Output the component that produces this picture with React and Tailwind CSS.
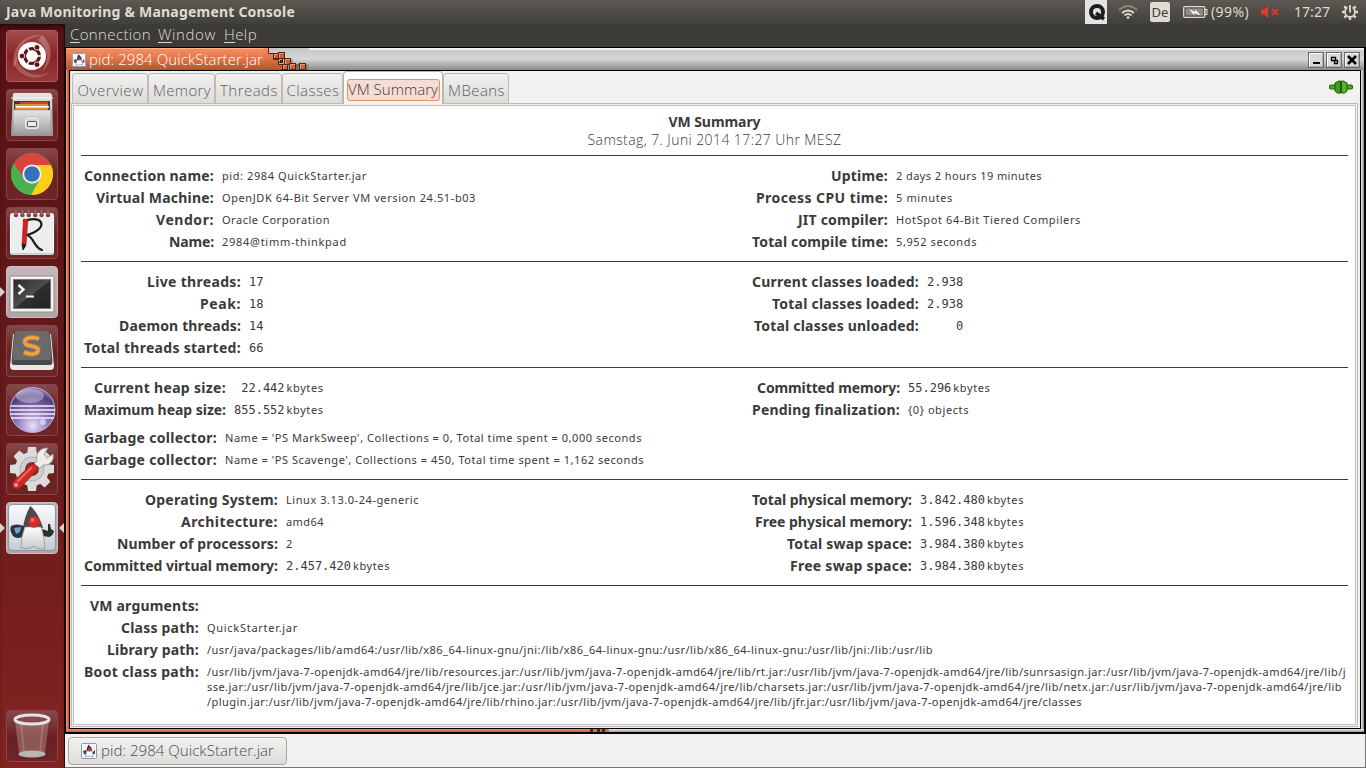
import React, { useLayoutEffect, useRef } from "react";

/* Single line of text whose tracking is adjusted to fill `w` pixels. */
function Fit({ w, className = "", children }) {
  const ref = useRef(null);
  useLayoutEffect(() => {
    const el = ref.current;
    el.style.letterSpacing = "0px";
    const natural = el.getBoundingClientRect().width;
    const n = el.textContent.length;
    if (n > 1) {
      const s = (w - natural) / n;
      el.style.letterSpacing = s.toFixed(4) + "px";
    }
  }, [w]);
  return (
    <span ref={ref} className={"inline-block whitespace-pre " + className}>
      {children}
    </span>
  );
}

const LIGHT = "font-['Open_Sans','Noto_Sans',sans-serif] font-light text-[15px] leading-5 ";

function JavaIcon({ className }) {
  return (
    <svg viewBox="0 0 16 16" className={className}>
      <rect x="0.5" y="0.5" width="15" height="15" rx="1" fill="#f4f7fa" stroke="#7f9db9" />
      <path d="M7.5 1.5 L10.500 5 L11.500 10 L5 10 L6 5Z" fill="#333" />
      <path d="M2 8 L5 7 L6 11 L3 11.500Z M12 9 L14 7 V11 H12Z" fill="#3c4b55" />
      <path d="M5.500 8 L11 8 L12 14 L9 13 L4.500 14Z" fill="#fff" stroke="#777" strokeWidth=".6" />
      <circle cx="8.600" cy="6.600" r="1.800" fill="#e23030" />
    </svg>
  );
}

function Tile({ children, kind = "dark", left, right }) {
  const bg =
    kind === "light"
      ? "bg-linear-to-b from-[#c4b6b9] to-[#b5a2a4] border-[#cdc0c2]"
      : kind === "red"
        ? "bg-linear-to-b from-[#a04b4c] via-[#8b2224] to-[#9a3a3b] border-[#a96061]"
        : "bg-linear-to-b from-[#86494b] via-[#6b2022] to-[#6f2426] border-[#85484a]";
  return (
    <div className="relative flex w-16 justify-center">
      {left && (
        <svg className="absolute left-0 top-[21px] h-[10px] w-[5px]" viewBox="0 0 5 10">
          <path d="M0 0 L5 5 L0 10Z" fill="#d8d0d0" />
        </svg>
      )}
      <div className={"h-[52px] w-[52px] overflow-hidden rounded-[4px] border " + bg}>{children}</div>
      {right && (
        <svg className="absolute right-0 top-[21px] h-[10px] w-[5px]" viewBox="0 0 5 10">
          <path d="M5 0 L0 5 L5 10Z" fill="#d8d0d0" />
        </svg>
      )}
    </div>
  );
}

const Ico = ({ children }) => (
  <svg viewBox="1 1 50 50" className="block h-[50px] w-[50px]">
    {children}
  </svg>
);

function Launcher() {
  return (
    <div className="flex w-[65px] shrink-0 flex-col items-start border-r border-[#1d0b0b] bg-linear-to-b from-[#561114] via-[#661a1b] to-[#832321] pt-[6px] shadow-[inset_0_5px_5px_-2px_rgba(0,0,0,0.5)]">
      <div className="flex flex-col gap-[7px]">
        <Tile kind="red">
          <Ico>
            <path d="M8 38 C4 14 22 2 38 6 C24 5 12 14 12 28Z" fill="#fff" opacity=".22" />
            <path d="M36 5 C48 16 47 32 36 42 C43 30 43 20 32 10Z" fill="#fff" opacity=".25" />
            <path d="M10 26 C12 40 28 50 44 42 C32 52 14 48 8 34Z" fill="#fff" opacity=".2" />
            <circle cx="26" cy="26" r="14" fill="#fff" />
            <circle cx="26" cy="26" r="7.400" fill="none" stroke="#5d1517" strokeWidth="3.400" />
            <g stroke="#fff" strokeWidth="1.600">
              <path d="M26 26 L36 26 M26 26 L21 34.700 M26 26 L21 17.300" />
            </g>
            <circle cx="26" cy="26" r="5.600" fill="#fff" />
            <g fill="#5d1517" stroke="#fff" strokeWidth=".8">
              <circle cx="16" cy="26" r="2.800" />
              <circle cx="31" cy="17.400" r="2.800" />
              <circle cx="31" cy="34.600" r="2.800" />
            </g>
          </Ico>
        </Tile>
        <Tile>
          <Ico>
            <defs>
              <linearGradient id="cab" x2="0" y2="1">
                <stop offset="0" stopColor="#e6e6e6" />
                <stop offset="1" stopColor="#9b9b9b" />
              </linearGradient>
            </defs>
            <path d="M7 5 Q7 4 9 4 H44 Q45 4 46 6 L47 46 Q47 47 46 47 H7 Q5 47 5 46Z" fill="url(#cab)" />
            <path d="M5 9 H47" stroke="#f7f7f7" />
            <rect x="8" y="12" width="36" height="12" fill="#3b3b3b" />
            <path d="M14 13 H25 L27 12.500 H42 V18 H14Z" fill="#b5501a" />
            <path d="M9 15 H42 V22 H9Z" fill="#e88a2e" />
            <rect x="10" y="17" width="33" height="1.600" fill="#fff" />
            <path d="M7 21 H45 V46 H7Z" fill="url(#cab)" stroke="#8b8b8b" strokeWidth=".6" />
            <rect x="19.500" y="29.500" width="13" height="10" rx="2" fill="#d0d0d0" stroke="#eee" />
            <rect x="21.500" y="32.500" width="9" height="5" rx="1" fill="#eee" stroke="#555" />
          </Ico>
        </Tile>
        <Tile>
          <Ico>
            <circle cx="26" cy="26" r="21" fill="#4cb050" />
            <path d="M7.800 15.500 A21 21 0 0 1 45.500 18 H26 L17 29Z" fill="#d9453d" />
            <path d="M26 17 H45 A21 21 0 0 1 25 47 L34 31 A10 10 0 0 0 26 17Z" fill="#fbcf15" />
            <path d="M7.500 16 L17 31 Q22 37 31 35 L25 47 A21 21 0 0 1 7.500 16Z" fill="#4cb050" />
            <circle cx="26" cy="26" r="9.600" fill="#f2f2f2" />
            <circle cx="26" cy="26" r="7.800" fill="#3573b9" />
          </Ico>
        </Tile>
        <Tile>
          <Ico>
            <rect x="4.500" y="6.500" width="43" height="41" rx="2" fill="#ededed" stroke="#fff" />
            <path d="M4 47 H48" stroke="#aaa" />
            {[10, 16.4, 22.8, 29.2, 35.6, 42].map((x) => (
              <g key={x}>
                <circle cx={x} cy="8" r="2.3" fill="#7d4142" />
                <rect x={x - 0.8} y="3" width="1.6" height="5" fill="#a46a6b" />
              </g>
            ))}
            <path d="M18 14 C38 7 43 22 21 28 C28 30 28 41 36 43" fill="none" stroke="#1b1b1b" strokeWidth="2.200" strokeLinecap="round" />
            <path d="M17.500 12 L22 12.500 L20 38 L16 37Z" fill="#d81e1e" stroke="#8a1212" strokeWidth=".5" />
            <path d="M16 37 L20 38 L17 43Z" fill="#222" stroke="#222" />
          </Ico>
        </Tile>
        <Tile kind="light" left>
          <Ico>
            <defs>
              <linearGradient id="term" x2="1" y2="1">
                <stop offset="0" stopColor="#2a2a2a" />
                <stop offset=".5" stopColor="#4d4d4d" />
                <stop offset=".52" stopColor="#2e2e2e" />
                <stop offset="1" stopColor="#222" />
              </linearGradient>
            </defs>
            <rect x="4" y="10" width="44" height="36" rx="1" fill="#f3f3f3" stroke="#8f8b8b" />
            <rect x="7.500" y="13.500" width="37" height="29" fill="url(#term)" stroke="#777" />
            <path d="M12.500 19 L17.500 23.500 L12.500 28" fill="none" stroke="#f4f4f4" strokeWidth="2.400" />
            <path d="M20 30.500 H28" stroke="#f4f4f4" strokeWidth="2" />
          </Ico>
        </Tile>
        <Tile>
          <Ico>
            <path d="M7 9 L4 41 Q4 45 8 45 H44 Q48 45 48 41 L45 9Z" fill="#e9e9e9" />
            <path d="M10 6 H42 Q44 6 44 8 L46.500 36 Q46.500 40 44 40 H8 Q5.500 40 5.500 36 L8 8 Q8 6 10 6Z" fill="#4a4a4a" />
            <path d="M11 6 H41 Q43 6 43.200 8 L45.500 33 Q45.500 35 43 35 H9 Q6.500 35 6.500 33 L8.800 8 Q9 6 11 6Z" fill="#6a6a6a" />
            <path d="M33 14 C25 11 18 13 19 18 C20 22 32 20 32 25 C32 30 23 30 18 27" fill="none" stroke="#ffb15e" strokeWidth="5" opacity=".45" />
            <path d="M33 14 C25 11 18 13 19 18 C20 22 32 20 32 25 C32 30 23 30 18 27" fill="none" stroke="#f7a03a" strokeWidth="3.200" />
          </Ico>
        </Tile>
        <Tile>
          <Ico>
            <defs>
              <radialGradient id="ecl" cx=".5" cy=".85" r=".9">
                <stop offset="0" stopColor="#e9dfff" />
                <stop offset=".4" stopColor="#8c78b9" />
                <stop offset=".75" stopColor="#51407f" />
                <stop offset="1" stopColor="#a79bd0" />
              </radialGradient>
            </defs>
            <circle cx="26.500" cy="26" r="22.500" fill="url(#ecl)" stroke="#b9aede" strokeWidth="1" />
            <ellipse cx="24" cy="12" rx="14" ry="7" fill="#fff" opacity=".35" />
            <path d="M5 22 H48 M4 26 H49 M4 30 H49 M5 34 H48" stroke="#f4effc" strokeWidth="1.400" />
            <circle cx="37" cy="38" r="3" fill="#fff" opacity=".5" />
          </Ico>
        </Tile>
        <Tile>
          <Ico>
            <g transform="translate(26 26)" fill="#dcdcdc">
              {[0, 45, 90, 135, 180, 225, 270, 315].map((a) => (
                <path key={a} transform={`rotate(${a})`} d="M-5 -14 L-4 -22 H4 L5 -14Z" />
              ))}
              <circle r="17" />
              <circle r="12" fill="#cfcfcf" stroke="#b0b0b0" />
              <circle r="7" fill="#7c3537" />
            </g>
            <path d="M31 18 C29 10 35 4 42 5 L38 11 L41 15 L47 11 C49 18 43 23 37 22 L32 27 L27 22Z" fill="#ededed" stroke="#8f8f8f" strokeWidth=".8" />
            <path d="M27 20 L33 25 L14 45 Q10 48 7 44.500 Q4 41 8 38Z" fill="#cf2a27" stroke="#8c1414" strokeWidth=".8" />
            <path d="M26 24 L11 39" stroke="#ee6a60" strokeWidth="2" />
            <circle cx="10" cy="42" r="1.800" fill="#f5b0a8" />
          </Ico>
        </Tile>
        <Tile kind="light" left right>
          <Ico>
            <defs>
              <linearGradient id="duke" x2="0" y2="1">
                <stop offset="0" stopColor="#fbfcfd" />
                <stop offset="1" stopColor="#c3cdd8" />
              </linearGradient>
              <linearGradient id="dukeb" x2="0" y2="1">
                <stop offset="0" stopColor="#fff" />
                <stop offset="1" stopColor="#c9c9c9" />
              </linearGradient>
            </defs>
            <rect x="2.500" y="2.500" width="47" height="46" rx="4" fill="url(#duke)" stroke="#8b99ab" strokeWidth="1.200" />
            <path d="M24.500 4 Q33 12 37 26 H17 Q19 12 24.500 4Z" fill="#4a4a4a" />
            <path d="M18 24 Q10 21 5 24 Q3 28 7 34 Q11 38 18 34Z" fill="#303335" />
            <path d="M8 26 L15 25 L14 30 L10 32Z" fill="#6ea2c8" />
            <path d="M36 27 L42 29 L42 22 L44 22 L45 27 L48 29 Q47 34 43 35 L37 34Z" fill="#2f2f2f" />
            <path d="M19 25 H35 Q39 36 39 47 Q31 48 28 44 Q23 48 15 46 Q15 34 19 25Z" fill="url(#dukeb)" stroke="#8d8d8d" strokeWidth=".7" />
            <circle cx="28" cy="20" r="5.800" fill="#d42a2a" />
            <circle cx="26.500" cy="18" r="2" fill="#ee6b66" />
          </Ico>
        </Tile>
      </div>
      <div className="mt-auto mb-[6px]">
        <Tile>
          <Ico>
            <path d="M9 10 L13 44 Q26 50 39 44 L43 10Z" fill="#fff" opacity=".24" />
            <path d="M15 12 L18 44 M37 12 L34 44" stroke="#fff" opacity=".15" strokeWidth="2" />
            <ellipse cx="26" cy="44" rx="13.500" ry="3.600" fill="#b9b5b3" />
            <ellipse cx="26" cy="9.500" rx="17" ry="4.500" fill="#89494a" stroke="#e6e4e2" strokeWidth="3" />
          </Ico>
        </Tile>
      </div>
    </div>
  );
}

function TopBar() {
  return (
    <div className="flex h-6 shrink-0 items-center bg-linear-to-b from-[#5b5951] to-[#403f3a] pl-[6px] pr-2 text-[#dfdbd2]">
      <Fit w={289} className="font-['Noto_Sans',sans-serif] text-[14px] leading-6 font-bold">
        Java Monitoring &amp; Management Console
      </Fit>
      <div className="ml-auto flex h-6 items-center">
        <svg viewBox="0 0 22 24" className="mr-[11px] h-6 w-[22px]">
          <rect width="22" height="24" fill="#e3e3e3" />
          <circle cx="12" cy="12" r="6" fill="none" stroke="#1d1d1d" strokeWidth="4" />
          <path d="M11 13 L19 19" stroke="#1d1d1d" strokeWidth="3.500" />
        </svg>
        <svg viewBox="0 0 20 16" className="mr-3 h-4 w-5" fill="none" strokeWidth="1.800">
          <path d="M1 6 Q10 -2 19 6" stroke="#87857d" />
          <path d="M4 9 Q10 4 16 9" stroke="#dfdbd2" />
          <path d="M6.500 11.500 Q10 8.500 13.500 11.500" stroke="#dfdbd2" />
          <circle cx="10" cy="13.600" r="1.300" fill="#dfdbd2" />
        </svg>
        <div className="mr-[13px] flex h-5 w-5 items-center justify-center rounded-[2px] bg-[#dfdbd2] font-['Noto_Sans',sans-serif] text-[13px] leading-5 text-[#3f3e39]">
          De
        </div>
        <svg viewBox="0 0 25 14" className="mr-[3px] h-[14px] w-[25px]">
          <rect x="0.700" y="1.700" width="21" height="10.600" rx="1" fill="none" stroke="#dfdbd2" strokeWidth="1.300" />
          <rect x="2.500" y="3.500" width="17.500" height="7" fill="#8f8c85" />
          <rect x="22" y="4.500" width="2" height="5" fill="none" stroke="#dfdbd2" />
          <path d="M6 4 L12 7 L12 4.500 L18 10.500 L11.500 8 L11 10Z" fill="#fff" />
        </svg>
        <Fit w={38} className="mr-3 font-['Noto_Sans',sans-serif] text-[14px] leading-6">
          (99%)
        </Fit>
        <svg viewBox="0 0 18 14" className="mr-[15px] h-[14px] w-[18px]">
          <path d="M0 4.500 H3 L7 1 V13 L3 9.500 H0Z" fill="#df382c" />
          <path d="M11 4 L17 10 M17 4 L11 10" stroke="#df382c" strokeWidth="1.800" />
        </svg>
        <Fit w={36} className="mr-3 font-['Noto_Sans',sans-serif] text-[14px] leading-6">
          17:27
        </Fit>
        <svg viewBox="-8 -8 16 16" className="h-4 w-4">
          {[45, 90, 135, 180, 225, 270, 315].map((a) => (
            <rect key={a} x="-1.200" y="-8" width="2.400" height="2.400" fill="#dfdbd2" transform={`rotate(${a})`} />
          ))}
          <circle r="5" fill="none" stroke="#dfdbd2" strokeWidth="1.800" />
          <rect x="-2.400" y="-8" width="4.800" height="6" fill="#4f4d46" />
          <rect x="-0.900" y="-7" width="1.800" height="7.500" fill="#dfdbd2" />
        </svg>
      </div>
    </div>
  );
}

function MenuBar() {
  const items = [
    ["Connection", 81, "mr-[7px]"],
    ["Window", 58, "mr-[8px]"],
    ["Help", 33, ""],
  ];
  return (
    <div className="flex h-[23px] shrink-0 items-start bg-[#3c3b37] pl-[5px] text-[#dfdbd2]">
      {items.map(([t, w, c]) => (
        <span key={t} className={"flex " + c}>
          <Fit w={w} className={LIGHT}>
            <span className="underline underline-offset-2">{t[0]}</span>
            {t.slice(1)}
          </Fit>
        </span>
      ))}
    </div>
  );
}

function WinButton({ children }) {
  return (
    <svg viewBox="0 0 16 16" className="h-4 w-4 bg-[#d9d9d9]">
      <rect x=".5" y=".5" width="15" height="15" fill="none" stroke="#6b6b6b" />
      <path d="M1.500 14 V1.500 H14" fill="none" stroke="#fff" />
      <path d="M2 14.500 H14.500 V2" fill="none" stroke="#aaa" />
      {children}
    </svg>
  );
}

function TitleBar() {
  const blocks = [
    [10, 5, 6],
    [15, 4, 7],
    [15, 10, 5],
    [21, 10, 7],
    [19, 16, 6],
    [26, 15, 7],
    [36, 15, 7],
  ];
  return (
    <div className="flex h-[22px] shrink-0 bg-linear-to-b from-[#c6c6c6] via-[#d6d6d6] to-[#8b8b8b]">
      <div className="flex w-[197px] items-center border-t border-[#ffb08a] bg-linear-to-b from-[#f58f63] via-[#e07245] to-[#ad5531] pl-[6px]">
        <JavaIcon className="mr-[3px] h-4 w-4" />
        <Fit w={174} className={LIGHT + "-mt-[2px] text-white"}>
          pid: 2984 QuickStarter.jar
        </Fit>
      </div>
      <svg viewBox="0 0 46 22" className="h-[22px] w-[46px]">
        <defs>
          <linearGradient id="ttl" x2="0" y2="1">
            <stop offset="0" stopColor="#f58f63" />
            <stop offset=".5" stopColor="#e07245" />
            <stop offset="1" stopColor="#ad5531" />
          </linearGradient>
          <linearGradient id="sh" x2="1">
            <stop offset="0" stopColor="#000" stopOpacity=".5" />
            <stop offset="1" stopColor="#000" stopOpacity="0" />
          </linearGradient>
        </defs>
        <rect x="41" y="16" width="5" height="6" fill="url(#sh)" />
        <rect x="32" y="16" width="4" height="6" fill="#6a6a6a" />
        <rect x="26" y="11" width="5" height="5" fill="url(#sh)" />
        <path d="M0 0 H5 V5 H10 V11 H15 V16 H19 V22 H0Z" fill="url(#ttl)" />
        <path d="M5.500 0 V5.500 H10.500 V11.500 H15.500 V16.500 H19.500 V22" fill="none" stroke="#55230f" />
        {blocks.map(([x, y, s]) => (
          <g key={x + "-" + y}>
            <rect x={x} y={y} width={s} height={s} fill="#55230f" />
            <rect x={x + 1} y={y + 1} width={s - 2} height={s - 2} fill="#c75f38" />
            <path d={`M${x + 1.5} ${y + s - 1} V${y + 1.5} H${x + s - 1}`} fill="none" stroke="#f09a75" />
          </g>
        ))}
        <rect x="17" y="12" width="3" height="3" fill="#3c2016" />
      </svg>
      <div className="flex flex-1 items-center justify-end gap-[2px] border-t-2 border-[#f1f1f1] pr-[4px]">
        <WinButton>
          <rect x="5" y="10" width="7" height="2" fill="#000" />
        </WinButton>
        <WinButton>
          <path d="M5.500 5.500 H9.500 V8.500 H5.500Z M8.500 8.500 H11.500 V11.500 H8.500Z" fill="none" stroke="#000" strokeWidth="1.300" />
        </WinButton>
        <WinButton>
          <path d="M4 4 L12 12 M12 4 L4 12" stroke="#000" strokeWidth="2.600" />
        </WinButton>
      </div>
    </div>
  );
}

function Tabs() {
  const tabs = [
    ["Overview", 66, "w-[76px]"],
    ["Memory", 58, "w-[67px]"],
    ["Threads", 58, "w-[67px]"],
    ["Classes", 53, "w-[61px]"],
    ["VM Summary", 90, "w-[100px]"],
    ["MBeans", 57, "w-[66px]"],
  ];
  return (
    <div className="flex h-[32px] items-end pl-[1px]">
      {tabs.map(([t, w, c], i) =>
        i === 4 ? (
          <div
            key={t}
            className={
              c +
              " relative -mb-px flex h-[33px] items-center justify-center rounded-t-[4px] border border-b-0 border-[#b7b3ad] bg-linear-to-b from-white to-[#f4f3f2] pt-[3px]"
            }
          >
            <div className="flex h-[22px] w-[93px] items-center justify-center rounded-[3px] border border-[#ee8f66] bg-[#f5ddd3]">
              <Fit w={w} className={LIGHT + "-mt-px text-[#3c3c3c]"}>
                {t}
              </Fit>
            </div>
          </div>
        ) : (
          <div
            key={t}
            className={
              c +
              " flex h-[30px] items-center justify-center rounded-t-[4px] border border-b-0 border-[#bfbbb6] bg-linear-to-b from-[#f2f1f0] to-[#dddbd8] pt-[3px] pl-[1px]"
            }
          >
            <Fit w={w} className={LIGHT + "text-[#5f5f5f]"}>
              {t}
            </Fit>
          </div>
        )
      )}
      <svg viewBox="0 0 24 14" className="mr-[7px] mb-[9px] ml-auto h-[14px] w-6">
        <rect x=".5" y="5" width="23" height="4" rx="1" fill="#4aa51f" stroke="#1f6a0c" />
        <path d="M7 2.500 Q11 0 11.500 1 V13 Q8 14 6 11 V3Z" fill="#3e9d1b" stroke="#1d5c0b" />
        <path d="M17 2.500 Q13 0 12.500 1 V13 Q16 14 18 11 V3Z" fill="#59b32c" stroke="#1d5c0b" />
      </svg>
    </div>
  );
}

const Sans = ({ w, children }) => (
  <Fit w={w} className="font-['Noto_Sans',sans-serif] text-[11px] leading-[22px]">
    {children}
  </Fit>
);
const Mono = ({ children }) => (
  <span className="font-['DejaVu_Sans_Mono',monospace] text-[12px] leading-[22px] whitespace-pre">{children}</span>
);
const Kb = ({ children }) => (
  <span className="flex gap-[2px]">
    <Mono>{children}</Mono>
    <Sans w={37}>kbytes</Sans>
  </span>
);

/* A block of label/value rows; `cols` fixes the label column's width. */
function Rows({ rows, cols }) {
  return (
    <div className="flex flex-col">
      {rows.map(([label, lw, value], i) => (
        <div key={i} className={"grid h-[22px] gap-x-[8px] " + cols}>
          <div className="flex h-[22px] justify-end">
            <Fit w={lw} className="font-['Noto_Sans',sans-serif] text-[14px] leading-[22px] font-bold">
              {label}
            </Fit>
          </div>
          <div className="flex min-w-0 items-start">{value}</div>
        </div>
      ))}
    </div>
  );
}

function Section({ left, right, className = "border-t border-[#3c3c3c] pt-[9px] pb-[8px]" }) {
  return (
    <div className={"grid grid-cols-[670px_1fr] pl-[3px] " + className}>
      {left}
      {right}
    </div>
  );
}

function Summary() {
  return (
    <div className="flex-1 bg-white px-[7px] pt-[7px] text-[#3a3a3a]">
      <div className="flex h-[42px] flex-col items-center">
        <Fit w={92} className="font-['Noto_Sans',sans-serif] text-[14px] leading-[18px] font-bold">
          VM Summary
        </Fit>
        <Fit w={254} className="font-['Open_Sans','Noto_Sans',sans-serif] text-[14px] leading-[18px] font-light">
          Samstag, 7. Juni 2014 17:27 Uhr MESZ
        </Fit>
      </div>
      <Section
        left={
          <Rows
            cols="grid-cols-[130px_1fr]"
            rows={[
              ["Connection name:", 130, <Sans w={145}>pid: 2984 QuickStarter.jar</Sans>],
              ["Virtual Machine:", 118, <Sans w={254}>OpenJDK 64-Bit Server VM version 24.51-b03</Sans>],
              ["Vendor:", 58, <Sans w={108}>Oracle Corporation</Sans>],
              ["Name:", 45, <Sans w={125}>2984@timm-thinkpad</Sans>],
            ]}
          />
        }
        right={
          <Rows
            cols="grid-cols-[134px_1fr]"
            rows={[
              ["Uptime:", 57, <Sans w={146}>2 days 2 hours 19 minutes</Sans>],
              ["Process CPU time:", 132, <Sans w={57}>5 minutes</Sans>],
              ["JIT compiler:", 90, <Sans w={185}>HotSpot 64-Bit Tiered Compilers</Sans>],
              ["Total compile time:", 136, <Sans w={81}>5,952 seconds</Sans>],
            ]}
          />
        }
      />
      <Section
        left={
          <Rows
            cols="grid-cols-[157px_1fr]"
            rows={[
              ["Live threads:", 94, <Mono>17</Mono>],
              ["Peak:", 41, <Mono>18</Mono>],
              ["Daemon threads:", 122, <Mono>14</Mono>],
              ["Total threads started:", 157, <Mono>66</Mono>],
            ]}
          />
        }
        right={
          <Rows
            cols="grid-cols-[165px_1fr]"
            rows={[
              ["Current classes loaded:", 167, <Mono>2.938</Mono>],
              ["Total classes loaded:", 147, <Mono>2.938</Mono>],
              ["Total classes unloaded:", 165, <Mono>{"    0"}</Mono>],
            ]}
          />
        }
      />
      <Section
        className="border-t border-[#3c3c3c] pt-[9px]"
        left={
          <Rows
            cols="grid-cols-[142px_1fr]"
            rows={[
              ["Current heap size:", 132, <Kb>{" 22.442"}</Kb>],
              ["Maximum heap size:", 142, <Kb>855.552</Kb>],
            ]}
          />
        }
        right={
          <Rows
            cols="grid-cols-[146px_1fr]"
            rows={[
              ["Committed memory:", 143, <Kb>55.296</Kb>],
              ["Pending finalization:", 148, <Sans w={61}>{"{0} objects"}</Sans>],
            ]}
          />
        }
      />
      <Section
        className="pt-[6px] pb-[8px]"
        left={
          <Rows
            cols="grid-cols-[133px_1fr]"
            rows={[
              ["Garbage collector:", 133, <Sans w={417}>Name = 'PS MarkSweep', Collections = 0, Total time spent = 0,000 seconds</Sans>],
              ["Garbage collector:", 133, <Sans w={419}>Name = 'PS Scavenge', Collections = 450, Total time spent = 1,162 seconds</Sans>],
            ]}
          />
        }
      />
      <Section
        left={
          <Rows
            cols="grid-cols-[194px_1fr]"
            rows={[
              ["Operating System:", 133, <Sans w={133}>Linux 3.13.0-24-generic</Sans>],
              ["Architecture:", 97, <Sans w={38}>amd64</Sans>],
              ["Number of processors:", 161, <Sans w={7}>2</Sans>],
              ["Committed virtual memory:", 194, <Kb>2.457.420</Kb>],
            ]}
          />
        }
        right={
          <Rows
            cols="grid-cols-[158px_1fr]"
            rows={[
              ["Total physical memory:", 160, <Kb>3.842.480</Kb>],
              ["Free physical memory:", 157, <Kb>1.596.348</Kb>],
              ["Total swap space:", 125, <Kb>3.984.380</Kb>],
              ["Free swap space:", 122, <Kb>3.984.380</Kb>],
            ]}
          />
        }
      />
      <div className="border-t border-[#3c3c3c] pt-[9px] pl-[3px]">
        <Rows
          cols="grid-cols-[115px_1fr]"
          rows={[
            ["VM arguments:", 109, null],
            ["Class path:", 78, <Sans w={91}>QuickStarter.jar</Sans>],
            [
              "Library path:",
              92,
              <Sans w={726}>
                /usr/java/packages/lib/amd64:/usr/lib/x86_64-linux-gnu/jni:/lib/x86_64-linux-gnu:/usr/lib/x86_64-linux-gnu:/usr/lib/jni:/lib:/usr/lib
              </Sans>,
            ],
            [
              "Boot class path:",
              115,
              <div className="flex flex-col items-start pt-[3px] font-['Noto_Sans',sans-serif] text-[11px] leading-[15px]">
                <Fit w={1139}>
                  /usr/lib/jvm/java-7-openjdk-amd64/jre/lib/resources.jar:/usr/lib/jvm/java-7-openjdk-amd64/jre/lib/rt.jar:/usr/lib/jvm/java-7-openjdk-amd64/jre/lib/sunrsasign.jar:/usr/lib/jvm/java-7-openjdk-amd64/jre/lib/j
                </Fit>
                <Fit w={1135}>
                  sse.jar:/usr/lib/jvm/java-7-openjdk-amd64/jre/lib/jce.jar:/usr/lib/jvm/java-7-openjdk-amd64/jre/lib/charsets.jar:/usr/lib/jvm/java-7-openjdk-amd64/jre/lib/netx.jar:/usr/lib/jvm/java-7-openjdk-amd64/jre/lib
                </Fit>
                <Fit w={875}>
                  /plugin.jar:/usr/lib/jvm/java-7-openjdk-amd64/jre/lib/rhino.jar:/usr/lib/jvm/java-7-openjdk-amd64/jre/lib/jfr.jar:/usr/lib/jvm/java-7-openjdk-amd64/jre/classes
                </Fit>
              </div>,
            ],
          ]}
        />
      </div>
    </div>
  );
}

export default function App() {
  return (
    <div className="flex h-[768px] w-[1366px] flex-col overflow-hidden bg-black">
      <TopBar />
      <div className="flex min-h-0 flex-1">
        <Launcher />
        <div className="flex min-w-0 flex-1 flex-col">
          <MenuBar />
          <div className="flex min-h-0 flex-1 flex-col pt-px pr-[2px] pb-[2px] pl-[1px]">
            <TitleBar />
            <div className="flex min-h-0 flex-1">
              <div className="w-[3px] bg-linear-to-r from-[#f79a73] via-[#e4754a] to-[#a04c2a]" />
              <div className="flex min-w-0 flex-1 flex-col border border-black bg-[#f2f1f0]">
                <div className="flex min-h-0 flex-1 flex-col border-l border-[#dcd9d6]">
                  <Tabs />
                  <div className="mr-[2px] mb-[1px] flex min-h-0 flex-1 flex-col border border-[#bfbbb6] bg-[#f2f1f0] p-px">
                    <div className="flex min-h-0 flex-1 flex-col border border-[#c4c1bc]">
                      <Summary />
                    </div>
                  </div>
                </div>
              </div>
              <div className="w-[3px] bg-linear-to-r from-[#e9e9e9] via-[#bdbdbd] to-[#8a8a8a]" />
            </div>
            <div className="flex h-[3px] shrink-0">
              <div className="w-[524px] bg-linear-to-b from-[#f08a5e] to-[#c9623a]" />
              <div className="flex w-[19px] gap-[2px] bg-[#4a2a1e] pl-[3px]">
                <div className="w-[4px] bg-[#d86b40]" />
                <div className="ml-[1px] w-[3px] bg-[#d86b40]" />
                <div className="ml-[1px] w-[4px] bg-[#d86b40]" />
              </div>
              <div className="flex-1 bg-linear-to-b from-[#ececec] to-[#9a9a9a]" />
            </div>
          </div>
          <div className="flex h-[34px] shrink-0 items-start border-r border-b border-[#777] bg-[#f2f1f0] pt-[3px] pl-[3px]">
            <div className="flex h-[28px] w-[219px] items-center rounded-[4px] border border-[#a9a6a1] bg-linear-to-b from-[#f3f2f1] to-[#dedcda] pl-[12px] text-[#4a4a4a]">
              <JavaIcon className="mr-[4px] h-4 w-4" />
              <Fit w={173} className={LIGHT + "-mt-[2px]"}>
                pid: 2984 QuickStarter.jar
              </Fit>
            </div>
          </div>
        </div>
      </div>
    </div>
  );
}
